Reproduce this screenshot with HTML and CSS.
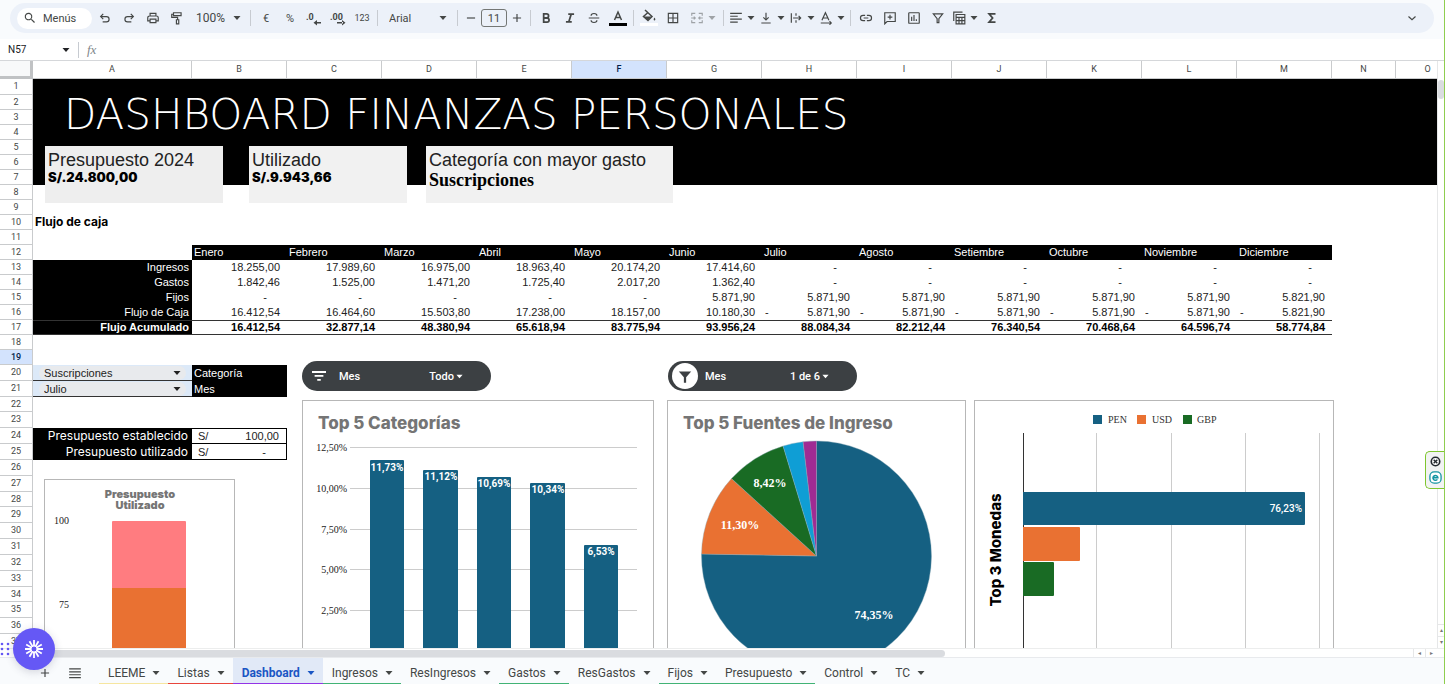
FILE: index.html
```html
<!DOCTYPE html>
<html lang="es">
<head>
<meta charset="utf-8">
<title>Dashboard Finanzas Personales</title>
<link rel="stylesheet" href="styles.css">
</head>
<body>
<svg class="defs" aria-hidden="true">
  <symbol id="arrow" viewBox="0 0 8 8"><path d="M0.500 2h7L4 6z"/></symbol>
</svg>

<header class="toolbar-wrap">
  <div class="toolbar">
    <button class="menus"><svg viewBox="0 0 24 24" class="ic"><path d="M15.500 14h-.8l-.3-.3A6.500 6.500 0 1 0 13.700 14.400l.3.3v.8l5 5 1.500-1.500zM9.500 14a4.500 4.500 0 1 1 0-9 4.500 4.500 0 0 1 0 9z"/></svg><span>Menús</span></button>
    <button class="tb" aria-label="Deshacer"><svg class="ic line" viewBox="0 0 24 24"><path d="M9 5L4.500 9.500 9 14M5 9.500h9.500a4.500 4.500 0 0 1 0 9H8"/></svg></button>
    <button class="tb" aria-label="Rehacer"><svg class="ic line" viewBox="0 0 24 24"><path d="M15 5l4.500 4.500L15 14M19 9.500H9.500a4.500 4.500 0 0 0 0 9H16"/></svg></button>
    <button class="tb" aria-label="Imprimir"><svg class="ic line" viewBox="0 0 24 24"><path d="M7 8V4h10v4M7 17H3v-5.500A3 3 0 0 1 6 8.500h12a3 3 0 0 1 3 3V17h-4M7 14h10v6H7z"/></svg></button>
    <button class="tb" aria-label="Copiar formato"><svg class="ic line" viewBox="0 0 24 24"><path d="M6 3h13v5H6zM6 5.500H3V11h10v4M11 15h4v7h-4z"/></svg></button>
    <label class="pick pick-zoom"><select aria-label="Zoom"><option>100%</option></select><svg class="ar"><use href="#arrow"/></svg></label>
    <i class="sep"></i>
    <button class="tb">€</button>
    <button class="tb">%</button>
    <button class="tb" aria-label="Menos decimales"><svg class="ic dec" viewBox="0 0 16 16"><text x="0" y="10">.0</text><path d="M9 12h6v1.500H9zM11 10v5.500L7.500 12.700z"/></svg></button>
    <button class="tb" aria-label="Más decimales"><svg class="ic dec" viewBox="0 0 16 16"><text x="0" y="10">.00</text><path d="M7 12h6v1.500H7zM12 10v5.500l3.500-2.800z"/></svg></button>
    <button class="tb small">123</button>
    <i class="sep"></i>
    <label class="pick pick-font"><select aria-label="Fuente"><option>Arial</option></select><svg class="ar"><use href="#arrow"/></svg></label>
    <i class="sep"></i>
    <button class="tb narrow" aria-label="Reducir"><svg class="ic line" viewBox="0 0 24 24"><path d="M5 12h14"/></svg></button>
    <input class="size" aria-label="Tamaño de fuente" value="11">
    <button class="tb narrow" aria-label="Aumentar"><svg class="ic line" viewBox="0 0 24 24"><path d="M5 12h14M12 5v14"/></svg></button>
    <i class="sep"></i>
    <button class="tb" aria-label="Negrita"><svg class="ic heavy" viewBox="0 0 24 24"><path d="M8 5h5a3.300 3.300 0 0 1 0 6.800H8zM8 12h5.800a3.500 3.500 0 0 1 0 7H8z"/></svg></button>
    <button class="tb" aria-label="Cursiva"><svg class="ic heavy" viewBox="0 0 24 24"><path d="M9 5.500h10M5 18.500h10M14 5.500L10 18.500"/></svg></button>
    <button class="tb" aria-label="Tachado"><svg class="ic line" viewBox="0 0 24 24"><path d="M3 12h18M17 8c0-5-10-5-10 0M7 16c0 5 10 5 10 0"/></svg></button>
    <button class="tb" aria-label="Color de texto"><svg class="ic tall" viewBox="0 0 18 18"><path class="st" d="M5.500 11L9 3l3.500 8M7 8.500h4"/><path class="black" d="M0 14h18v3H0z"/></svg></button>
    <i class="sep"></i>
    <button class="tb" aria-label="Color de relleno"><svg class="ic tall" viewBox="0 0 18 18"><path class="st" d="M5 1l7 6.500-4 4L3.500 7.500 8 3.500"/><path d="M3.500 7.500h8l-3.800 4zM14.500 8.500c3 4-3 4 0 0z"/><path class="white" d="M0 14h18v3H0z"/></svg></button>
    <button class="tb" aria-label="Bordes"><svg class="ic line" viewBox="0 0 24 24"><path d="M4 4h16v16H4zM12 4v16M4 12h16"/></svg></button>
    <button class="tb wide dim" aria-label="Combinar celdas"><svg class="ic line" viewBox="0 0 24 24"><path d="M9 4H3v4M15 4h6v4M9 20H3v-4M15 20h6v-4M2 12h7M22 12h-7M6.500 9.500L9 12l-2.500 2.500M17.500 9.500L15 12l2.500 2.500"/></svg><svg class="ar"><use href="#arrow"/></svg></button>
    <i class="sep"></i>
    <button class="tb wide" aria-label="Alineación horizontal"><svg class="ic line" viewBox="0 0 24 24"><path d="M2 4h20M2 9h13M2 14h20M2 19h13"/></svg><svg class="ar"><use href="#arrow"/></svg></button>
    <button class="tb wide" aria-label="Alineación vertical"><svg class="ic line" viewBox="0 0 24 24"><path d="M12 3v12M7.500 11l4.500 4.500 4.500-4.500M4 20.500h16"/></svg><svg class="ar"><use href="#arrow"/></svg></button>
    <button class="tb wide" aria-label="Ajuste de texto"><svg class="ic line" viewBox="0 0 24 24"><path d="M4 4v16M12 4v4M12 16v4M7 12h13M16.500 8.500L20 12l-3.500 3.500"/></svg><svg class="ar"><use href="#arrow"/></svg></button>
    <button class="tb wide" aria-label="Rotación de texto"><svg class="ic line" viewBox="0 0 24 24"><path d="M5 16l6-13 6 13M7.500 12h7M3 20.500h18M18 17.500l3 3-3 3"/></svg><svg class="ar"><use href="#arrow"/></svg></button>
    <i class="sep"></i>
    <button class="tb" aria-label="Insertar enlace"><svg class="ic line" viewBox="0 0 24 24"><path d="M10.500 7.500H7a4.500 4.500 0 0 0 0 9h3.500M13.500 7.500H17a4.500 4.500 0 0 1 0 9h-3.500M8 12h8"/></svg></button>
    <button class="tb" aria-label="Insertar comentario"><svg class="ic line" viewBox="0 0 24 24"><path d="M3 22V3h18v15H7zM12 6.500v8M8 10.500h8"/></svg></button>
    <button class="tb" aria-label="Insertar gráfico"><svg class="ic line" viewBox="0 0 24 24"><rect x="3" y="3" width="18" height="18" rx="1"/><path d="M8 10v7M12 7v10M16 14v3"/></svg></button>
    <button class="tb" aria-label="Filtro"><svg class="ic line" viewBox="0 0 24 24"><path d="M4 5h16l-6.500 8v7h-3v-7z"/></svg></button>
    <button class="tb wide" aria-label="Tablas"><svg class="ic line" viewBox="0 0 24 24"><path d="M3 17V2h15M7 6h15v16H7zM7 11h15M7 16.500h15M12 11v11M17 11v11"/></svg><svg class="ar"><use href="#arrow"/></svg></button>
    <button class="tb" aria-label="Funciones"><svg class="ic heavy" viewBox="0 0 24 24"><path d="M18 5H7l6 7-6 7h11"/></svg></button>
    <button class="tb last" aria-label="Ocultar menús"><svg class="ic line" viewBox="0 0 24 24"><path d="M6 9.500l6 5.500 6-5.500"/></svg></button>
  </div>
</header>

<div class="formula">
  <label class="pick pick-name"><input aria-label="Cuadro de nombres" value="N57"><svg class="ar"><use href="#arrow"/></svg></label>
  <i class="sep"></i>
  <span class="fx">fx</span>
  <input class="fx-input" aria-label="Fórmula">
</div>

<main class="work">
<div class="sheet">
<table class="grid">
<colgroup><col class="c-num"><col class="c-a"><col span="12" class="c-m"><col span="2" class="c-n"></colgroup>
<thead><tr><th class="corner"></th><th>A</th><th>B</th><th>C</th><th>D</th><th>E</th><th class="on">F</th><th>G</th><th>H</th><th>I</th><th>J</th><th>K</th><th>L</th><th>M</th><th>N</th><th>O</th></tr></thead>
<tbody>
<tr class="banner tall"><th>1</th><td colspan="15"></td></tr>
<tr class="banner"><th>2</th><td colspan="15"></td></tr>
<tr class="banner"><th>3</th><td colspan="15"></td></tr>
<tr class="banner"><th>4</th><td colspan="15"></td></tr>
<tr class="banner"><th>5</th><td colspan="15"></td></tr>
<tr class="banner"><th>6</th><td colspan="15"></td></tr>
<tr class="banner"><th>7</th><td colspan="15"></td></tr>
<tr><th>8</th></tr>
<tr><th>9</th></tr>
<tr><th>10</th><td class="subtitle">Flujo de caja</td></tr>
<tr><th>11</th></tr>
<tr class="months"><th>12</th><td></td><td>Enero</td><td>Febrero</td><td>Marzo</td><td>Abril</td><td>Mayo</td><td>Junio</td><td>Julio</td><td>Agosto</td><td>Setiembre</td><td>Octubre</td><td>Noviembre</td><td>Diciembre</td></tr>
<tr class="nums"><th>13</th><td class="lab">Ingresos</td><td>18.255,00</td><td>17.989,60</td><td>16.975,00</td><td>18.963,40</td><td>20.174,20</td><td>17.414,60</td><td class="nil">-</td><td class="nil">-</td><td class="nil">-</td><td class="nil">-</td><td class="nil">-</td><td class="nil">-</td></tr>
<tr class="nums"><th>14</th><td class="lab">Gastos</td><td>1.842,46</td><td>1.525,00</td><td>1.471,20</td><td>1.725,40</td><td>2.017,20</td><td>1.362,40</td><td class="nil">-</td><td class="nil">-</td><td class="nil">-</td><td class="nil">-</td><td class="nil">-</td><td class="nil">-</td></tr>
<tr class="nums"><th>15</th><td class="lab">Fijos</td><td class="nil">-</td><td class="nil">-</td><td class="nil">-</td><td class="nil">-</td><td class="nil">-</td><td>5.871,90</td><td>5.871,90</td><td>5.871,90</td><td>5.871,90</td><td>5.871,90</td><td>5.871,90</td><td>5.821,90</td></tr>
<tr class="nums"><th>16</th><td class="lab">Flujo de Caja</td><td>16.412,54</td><td>16.464,60</td><td>15.503,80</td><td>17.238,00</td><td>18.157,00</td><td>10.180,30</td><td><span>-</span>5.871,90</td><td><span>-</span>5.871,90</td><td><span>-</span>5.871,90</td><td><span>-</span>5.871,90</td><td><span>-</span>5.871,90</td><td><span>-</span>5.821,90</td></tr>
<tr class="nums total"><th>17</th><td class="lab">Flujo Acumulado</td><td>16.412,54</td><td>32.877,14</td><td>48.380,94</td><td>65.618,94</td><td>83.775,94</td><td>93.956,24</td><td>88.084,34</td><td>82.212,44</td><td>76.340,54</td><td>70.468,64</td><td>64.596,74</td><td>58.774,84</td></tr>
<tr><th>18</th></tr>
<tr><th class="on">19</th></tr>
<tr class="tall"><th>20</th><td class="drop"><label class="pick chip"><select id="cat" aria-label="Categoría"><option>Suscripciones</option></select><svg class="ar"><use href="#arrow"/></svg></label></td><td class="dark">Categoría</td></tr>
<tr class="tall"><th>21</th><td class="drop"><label class="pick chip"><select id="mes" aria-label="Mes"><option>Julio</option></select><svg class="ar"><use href="#arrow"/></svg></label></td><td class="dark">Mes</td></tr>
<tr><th>22</th></tr>
<tr class="tall"><th>23</th></tr>
<tr class="tall nums budget first"><th>24</th><td class="lab">Presupuesto establecido</td><td><span>S/</span>100,00</td></tr>
<tr class="tall nums budget"><th>25</th><td class="lab">Presupuesto utilizado</td><td class="nil"><span>S/</span>-</td></tr>
<tr class="tall"><th>26</th></tr>
<tr class="tall"><th>27</th></tr>
<tr><th>28</th></tr>
<tr class="tall"><th>29</th></tr>
<tr class="tall"><th>30</th></tr>
<tr class="tall"><th>31</th></tr>
<tr class="tall"><th>32</th></tr>
<tr class="tall"><th>33</th></tr>
<tr><th>34</th></tr>
<tr class="tall"><th>35</th></tr>
<tr class="tall"><th>36</th></tr>
<tr class="tall"><th>37</th></tr>
</tbody>
</table>

<h1 class="title">DASHBOARD FINANZAS PERSONALES</h1>

<section class="kpi kpi-budget"><h2>Presupuesto 2024</h2><p>S/.24.800,00</p></section>
<section class="kpi kpi-used"><h2>Utilizado</h2><p>S/.9.943,66</p></section>
<section class="kpi kpi-top"><h2>Categoría con mayor gasto</h2><p class="serif">Suscripciones</p></section>

<button class="slicer slicer-cat">
  <span class="s-ic"><svg viewBox="0 0 16 12"><path d="M0 0h16v2.200H0zM3 4.500h10v2.200H3zM6 9h4v2.200H6z"/></svg></span>
  <span class="s-name">Mes</span><span class="s-val">Todo</span><svg class="ar"><use href="#arrow"/></svg>
</button>
<button class="slicer slicer-inc">
  <span class="s-ic active"><svg viewBox="0 0 16 16"><path d="M2.500 4h11L9 9v5H7V9z"/></svg></span>
  <span class="s-name">Mes</span><span class="s-val">1 de 6</span><svg class="ar"><use href="#arrow"/></svg>
</button>

<svg class="chart chart-budget" width="189" height="260" viewBox="0 0 189 260">
  <text x="95" y="18" class="ttl-s">Presupuesto</text><text x="95" y="29" class="ttl-s">Utilizado</text>
  <text x="24" y="44" class="ax">100</text><text x="24" y="128" class="ax">75</text>
  <path fill="#ff7c80" d="M67 108V42q0-1 1-1h72q1 0 1 1v66z"/><path fill="#e97132" d="M67 108h74v152H67z"/>
</svg>

<svg class="chart chart-cat" width="350" height="290" viewBox="0 0 350 290">
  <text x="15" y="28" class="ttl">Top 5 Categorías</text>
  <path class="gl" d="M47 46.500h287M47 87.500h287M47 128.500h287M47 168.500h287M47 209.500h287"/>
  <g class="ax"><text x="44" y="50">12,50%</text><text x="44" y="91">10,00%</text><text x="44" y="132">7,50%</text><text x="44" y="172">5,00%</text><text x="44" y="213">2,50%</text><text x="44" y="254">0,00%</text></g>
  <g fill="#156082"><rect x="67" y="59" width="34" height="240" rx="1"/><rect x="120" y="69" width="35" height="240" rx="1"/><rect x="174" y="76" width="34" height="240" rx="1"/><rect x="227" y="82" width="35" height="240" rx="1"/><rect x="281" y="144" width="34" height="240" rx="1"/></g>
  <g class="val"><text x="84" y="70">11,73%</text><text x="138" y="79">11,12%</text><text x="191" y="86">10,69%</text><text x="245" y="92">10,34%</text><text x="298" y="154">6,53%</text></g>
</svg>

<svg class="chart chart-inc" width="297" height="290" viewBox="0 0 297 290">
  <text x="15" y="28" class="ttl">Top 5 Fuentes de Ingreso</text>
  <g stroke="#8aa9b5" stroke-width=".4">
  <path fill="#156082" d="M148.500 155V40A115 115 0 1 1 33.500 153z"/>
  <path fill="#e97132" d="M148.500 155L33.500 153A115 115 0 0 1 63.500 77.600z"/>
  <path fill="#196b24" d="M148.500 155L63.500 77.600A115 115 0 0 1 115.100 45z"/>
  <path fill="#0f9ed5" d="M148.500 155L115.100 45A115 115 0 0 1 135.100 40.800z"/>
  <path fill="#a02b93" d="M148.500 155L135.100 40.800A115 115 0 0 1 148.500 40z"/>
  </g>
  <g class="pie"><text x="206" y="218">74,35%</text><text x="72" y="128">11,30%</text><text x="102" y="86">8,42%</text></g>
</svg>

<svg class="chart chart-cur" width="358" height="290" viewBox="0 0 358 290">
  <rect x="118" y="14" width="9" height="9" fill="#156082"/><rect x="162" y="14" width="9" height="9" fill="#e97132"/><rect x="208" y="14" width="9" height="9" fill="#196b24"/>
  <g class="lg"><text x="133" y="22">PEN</text><text x="177" y="22">USD</text><text x="222" y="22">GBP</text></g>
  <path class="gl" d="M121.500 32v260M196.500 32v260M270.500 32v260M344.500 32v260"/>
  <path class="axis" d="M48.500 32v260"/>
  <path fill="#156082" d="M48 91h281q1 0 1 1v31q0 1-1 1H48z"/><path fill="#e97132" d="M48 126h56q1 0 1 1v32q0 1-1 1H48z"/><path fill="#196b24" d="M48 161h30q1 0 1 1v32q0 1-1 1H48z"/>
  <text x="327" y="111" class="val-end">76,23%</text>
  <text class="ttl-v" transform="translate(26 149) rotate(-90)">Top 3 Monedas</text>
</svg>
</div>

<div class="vbar"><i class="vthumb"></i><button aria-label="Subir">▴</button><button aria-label="Bajar">▾</button></div>
</main>

<div class="hbar"><i class="hthumb"></i><button aria-label="Izquierda">◂</button><button aria-label="Derecha">▸</button></div>

<footer class="tabs">
  <button class="tool" aria-label="Añadir hoja"><svg class="ic line" viewBox="0 0 24 24"><path d="M5 12h14M12 5v14"/></svg></button>
  <button class="tool" aria-label="Todas las hojas"><svg class="ic line" viewBox="0 0 24 24"><path d="M2 5h20M2 10h20M2 15h20M2 20h20"/></svg></button>
  <button class="tab yellow">LEEME<svg class="ar"><use href="#arrow"/></svg></button>
  <button class="tab red">Listas<svg class="ar"><use href="#arrow"/></svg></button>
  <button class="tab purple current">Dashboard<svg class="ar"><use href="#arrow"/></svg></button>
  <button class="tab green">Ingresos<svg class="ar"><use href="#arrow"/></svg></button>
  <button class="tab">ResIngresos<svg class="ar"><use href="#arrow"/></svg></button>
  <button class="tab green">Gastos<svg class="ar"><use href="#arrow"/></svg></button>
  <button class="tab">ResGastos<svg class="ar"><use href="#arrow"/></svg></button>
  <button class="tab green">Fijos<svg class="ar"><use href="#arrow"/></svg></button>
  <button class="tab green">Presupuesto<svg class="ar"><use href="#arrow"/></svg></button>
  <button class="tab">Control<svg class="ar"><use href="#arrow"/></svg></button>
  <button class="tab">TC<svg class="ar"><use href="#arrow"/></svg></button>
</footer>

<div class="assistant">
  <svg class="grip" width="10" height="14" viewBox="0 0 10 14"><g fill="#6558f5"><circle cx="2" cy="2" r="1.300"/><circle cx="8" cy="2" r="1.300"/><circle cx="2" cy="7" r="1.300"/><circle cx="8" cy="7" r="1.300"/><circle cx="2" cy="12" r="1.300"/><circle cx="8" cy="12" r="1.300"/></g></svg>
  <button class="fab" aria-label="Asistente"><svg width="20" height="20" viewBox="0 0 20 20"><path fill="none" stroke="#fff" stroke-width="1.800" d="M10 1v6M10 13v6M1 10h6M13 10h6M5.500 2.200l3 5.200M11.500 12.600l3 5.200M2.200 5.500l5.200 3M12.600 11.500l5.200 3M2.200 14.500l5.200-3M12.600 8.500l5.200-3M5.500 17.800l3-5.200M11.500 7.400l3-5.200"/><circle cx="10" cy="10" r="3" fill="none" stroke="#fff"/></svg></button>
</div>

<aside class="widget">
  <button aria-label="Cerrar"><svg width="11" height="11" viewBox="0 0 12 12"><circle cx="6" cy="6" r="4.600" fill="#fff" stroke="#24292f" stroke-width="1.800"/><path stroke="#24292f" stroke-width="1.500" d="M4 4l4 4M8 4L4 8"/></svg></button>
  <button aria-label="Abrir"><svg width="13" height="13" viewBox="0 0 14 14"><rect x="1" y="1" width="12" height="12" rx="4.500" fill="#fff" stroke="#1595a3" stroke-width="1.400"/><path fill="none" stroke="#1595a3" stroke-width="1.700" d="M4.500 7.200h5A2.600 2.600 0 1 0 9 9"/></svg></button>
</aside>
</body>
</html>
```
FILE: styles.css
```css
* { box-sizing: border-box; }
html, body { height: 100%; }
body {
  margin: 0;
  display: flex;
  flex-direction: column;
  position: relative;
  overflow: hidden;
  border-right: 1px solid #8fce4f;
  background: #fff;
  font: 11px "Liberation Sans", Arial, sans-serif;
  color: #000;
}
button, input, select { font: inherit; color: inherit; background: none; border: 0; padding: 0; margin: 0; border-radius: 0; }
select { appearance: none; }
.defs { position: absolute; width: 0; height: 0; }

/* toolbar */
.toolbar-wrap { flex: none; padding: 3px 10px 6px; background: #f9fbfd; }
.toolbar {
  display: flex;
  align-items: center;
  height: 30px;
  padding: 0 10px 0 7px;
  border-radius: 15px;
  background: #ecf1f9;
  color: #444746;
  font: 11px Roboto, sans-serif;
}
.menus { display: flex; align-items: center; gap: 6px; width: 75px; height: 21px; margin-right: 1px; padding-left: 6px; border-radius: 11px; background: #fff; }
.ic { width: 14px; height: 14px; fill: #444746; flex: none; display: block; }
.ic.tall { width: 18px; height: 18px; }
.ic.line { fill: none; stroke: #444746; stroke-width: 2; }
.ic.heavy { fill: none; stroke: #444746; stroke-width: 3; }
.ic .st { fill: none; stroke: #444746; stroke-width: 1.500; }
.ic .black { fill: #000; }
.ic .white { fill: #fff; }
.ic.dec { width: 16px; height: 16px; overflow: visible; font: bold 9px Roboto, sans-serif; }
.ar { width: 8px; height: 8px; fill: currentColor; flex: none; }
.tb { display: flex; align-items: center; justify-content: center; width: 24px; height: 24px; flex: none; }
.tb.narrow { width: 20px; }
.tb.small { font-size: 9px; }
.tb.wide { width: 30px; gap: 4px; }
.tb.dim { width: 35px; opacity: .45; }
.tb.last { margin-left: auto; }
.sep { width: 1px; height: 16px; margin: 0 3px; background: #c7cbd1; flex: none; }
.pick { display: flex; align-items: center; }
.pick select, .pick input { flex: 1; min-width: 0; outline: 0; }
.pick-zoom { width: 58px; padding: 0 6px 0 7px; font-size: 12px; }
.pick-font { width: 73px; padding: 0 7px 0 8px; }
.size { width: 26px; height: 18px; border: 1px solid #747775; border-radius: 3px; text-align: center; }

/* formula bar */
.formula { flex: none; display: flex; align-items: center; height: 22px; border-bottom: 1px solid #d5d7da; font-family: Roboto, sans-serif; font-size: 10px; color: #202124; }
.pick-name { width: 75px; padding: 0 5px 0 8px; }
.fx { padding-left: 5px; font: italic 13px "Liberation Serif", serif; color: #80868b; }
.fx-input { flex: 1; outline: 0; }

/* sheet */
.work { flex: 1; min-height: 0; display: flex; }
.sheet { flex: 1; min-width: 0; position: relative; overflow: hidden; }
.grid { table-layout: fixed; width: 1460px; border-collapse: separate; border-spacing: 0; }
.c-num { width: 33px; }
.c-a { width: 159px; }
.c-m { width: 95px; }
.c-n { width: 64px; }
.grid th { padding: 0; border: solid #c9cbcd; border-width: 0 1px 1px 0; background: #fff; font: 9px/14px Roboto, sans-serif; color: #444746; }
.grid thead th { height: 18px; line-height: 17px; }
.grid .corner { border: solid #c0c2c4; border-width: 0 3px 3px 0; background: #f8f9fa; }
.grid th.on { background: #d3e3fd; color: #041e49; font-weight: 500; }
.grid td { height: 15px; padding: 0 3px 0 2px; line-height: 14px; white-space: nowrap; vertical-align: top; }
.grid .tall > * { height: 16px; line-height: 15px; }
.banner td { background: #000; }
.grid .subtitle { font: bold 12px/14px Inter, sans-serif; }
.months td { background: #000; color: #fff; }
.months td:nth-child(2) { background: none; }
.grid .nums td { text-align: right; padding-right: 7px; padding-left: 3px; color: #222; }
.grid .nums td.nil { padding-right: 20px; }
.grid .nums td.lab, .grid td.dark { background: #000; color: #fff; padding-right: 3px; }
.grid td.dark { padding-top: 1px; }
.nums span { float: left; }
.grid .total td { border: solid #333; border-width: 1px 0; line-height: 13px; font-weight: bold; color: #000; }
.grid td.drop { padding: 1px 0 0; background: #dce9f8; border-bottom: 1px solid #333; }
.chip { height: 14px; margin: 0 6px; padding: 0 5px 0 5px; border-radius: 7px; background: #e8eaed; color: #222; }
.grid .budget td { padding-top: 1px; border: solid #000; border-width: 0 1px 1px 0; line-height: 14px; padding-left: 6px; }
.grid .budget.first td { padding-top: 0; border-top-width: 1px; }
.grid .budget td.lab { font-family: Inter, sans-serif; font-size: 12px; }

/* objects floating over the grid */
.title { position: absolute; left: 64px; top: 28px; margin: 0; font: 200 42px/52px "DejaVu Sans", sans-serif; color: #fff; white-space: nowrap; }
.kpi { position: absolute; top: 85px; height: 57px; padding: 4px 3px; background: #f1f1f1; white-space: nowrap; }
.kpi h2 { margin: 0; font-weight: normal; font-size: 18px; line-height: 20px; color: #222; }
.kpi p { margin: 0; font: 900 13px/15px Inter, sans-serif; }
.kpi .serif { font: bold 18px/20px "Liberation Serif", serif; }
.kpi-budget { left: 45px; width: 178px; background: #eee; }
.kpi-used { left: 249px; width: 158px; }
.kpi-top { left: 426px; width: 247px; }
.slicer { position: absolute; top: 300px; display: flex; align-items: center; width: 189px; height: 30px; padding: 0 28px 0 4px; border-radius: 15px; background: #3c4043; color: #fff; font: 500 11px Roboto, sans-serif; }
.slicer-cat { left: 302px; }
.slicer-inc { left: 668px; }
.s-ic { display: flex; align-items: center; justify-content: center; width: 26px; height: 26px; border-radius: 50%; }
.s-ic svg { width: 14px; fill: #fff; }
.s-ic.active { background: #fff; }
.s-ic.active svg { width: 18px; fill: #3c4043; }
.s-name { flex: 1; padding-left: 7px; text-align: left; }
.s-val { padding-right: 2px; }
.slicer .ar { width: 7px; height: 7px; }
.chart { position: absolute; box-sizing: content-box; border: 1px solid #b7b7b7; background: #fff; }
.chart-budget { left: 44px; top: 418px; }
.chart-cat { left: 302px; top: 339px; }
.chart-inc { left: 667px; top: 339px; }
.chart-cur { left: 974px; top: 339px; }
.ttl { font: 800 17px Inter, sans-serif; fill: #757575; }
.ttl-s { font: 900 11px Inter, sans-serif; fill: #757575; text-anchor: middle; }
.ttl-v { font: 800 15px Inter, sans-serif; text-anchor: middle; }
.ax { font: 10px "Liberation Serif", serif; fill: #222; text-anchor: end; }
.lg { font: 10px "Liberation Serif", serif; fill: #333; }
.val { font: bold 10px Roboto, sans-serif; fill: #fff; text-anchor: middle; }
.val-end { font: 500 10px Roboto, sans-serif; fill: #fff; text-anchor: end; }
.pie { font: bold 12px "Liberation Serif", serif; fill: #fff; text-anchor: middle; }
.gl { stroke: #ccc; }
.axis { stroke: #333; }

/* scroll bars */
.vbar { flex: none; width: 7px; display: flex; flex-direction: column; border-left: 1px solid #e6e7e8; }
.vthumb { height: 19px; margin: 19px 0 auto; background: #dadce0; border-radius: 3px; }
.vbar button { height: 12px; border-top: 1px solid #e6e7e8; font-size: 6px; line-height: 11px; color: #777; }
.hbar { flex: none; display: flex; align-items: center; height: 10px; padding-left: 32px; padding-right: 7px; border-top: 1px solid #eceded; border-bottom: 1px solid #e8eaed; }
.hthumb { width: 65%; height: 7px; margin-right: auto; border-radius: 4px; background: #dadce0; }
.hbar button { width: 12px; height: 8px; border-left: 1px solid #e6e7e8; font-size: 6px; line-height: 8px; color: #777; }

/* sheet tabs */
.tabs { flex: none; display: flex; height: 26px; padding-left: 32px; background: #f9fbfd; color: #444746; font: 12px Roboto, sans-serif; }
.tool { display: flex; align-items: center; justify-content: center; width: 26px; padding-top: 3px; }
.tool + .tool { width: 34px; margin-right: 7px; }
.tab { display: flex; align-items: center; gap: 7px; padding: 4px 8px 0 9px; border-bottom: 1px solid transparent; }
.tab.current { background: #e1e9f7; color: #1a56c4; font-weight: bold; }
.tab.yellow { border-color: #f6e6a0; }
.tab.red { border-color: #e8453c; }
.tab.purple { border-color: #9334e6; }
.tab.green { border-color: #41b375; }

/* browser helpers docked at the edges */
.assistant { position: absolute; left: 0; bottom: 14px; display: flex; align-items: center; gap: 3px; }
.fab { display: flex; align-items: center; justify-content: center; width: 42px; height: 42px; border-radius: 50%; background: #6558f5; box-shadow: 0 2px 8px rgba(60, 60, 90, .2); }
.widget { position: absolute; right: -1px; top: 451px; display: flex; flex-direction: column; align-items: center; justify-content: space-evenly; width: 20px; height: 38px; border: solid #7fc62e; border-width: 1px 0 1px 1px; border-radius: 5px 0 0 5px; background: #f2f3f3; }
.widget button, .widget svg { display: block; }
```
